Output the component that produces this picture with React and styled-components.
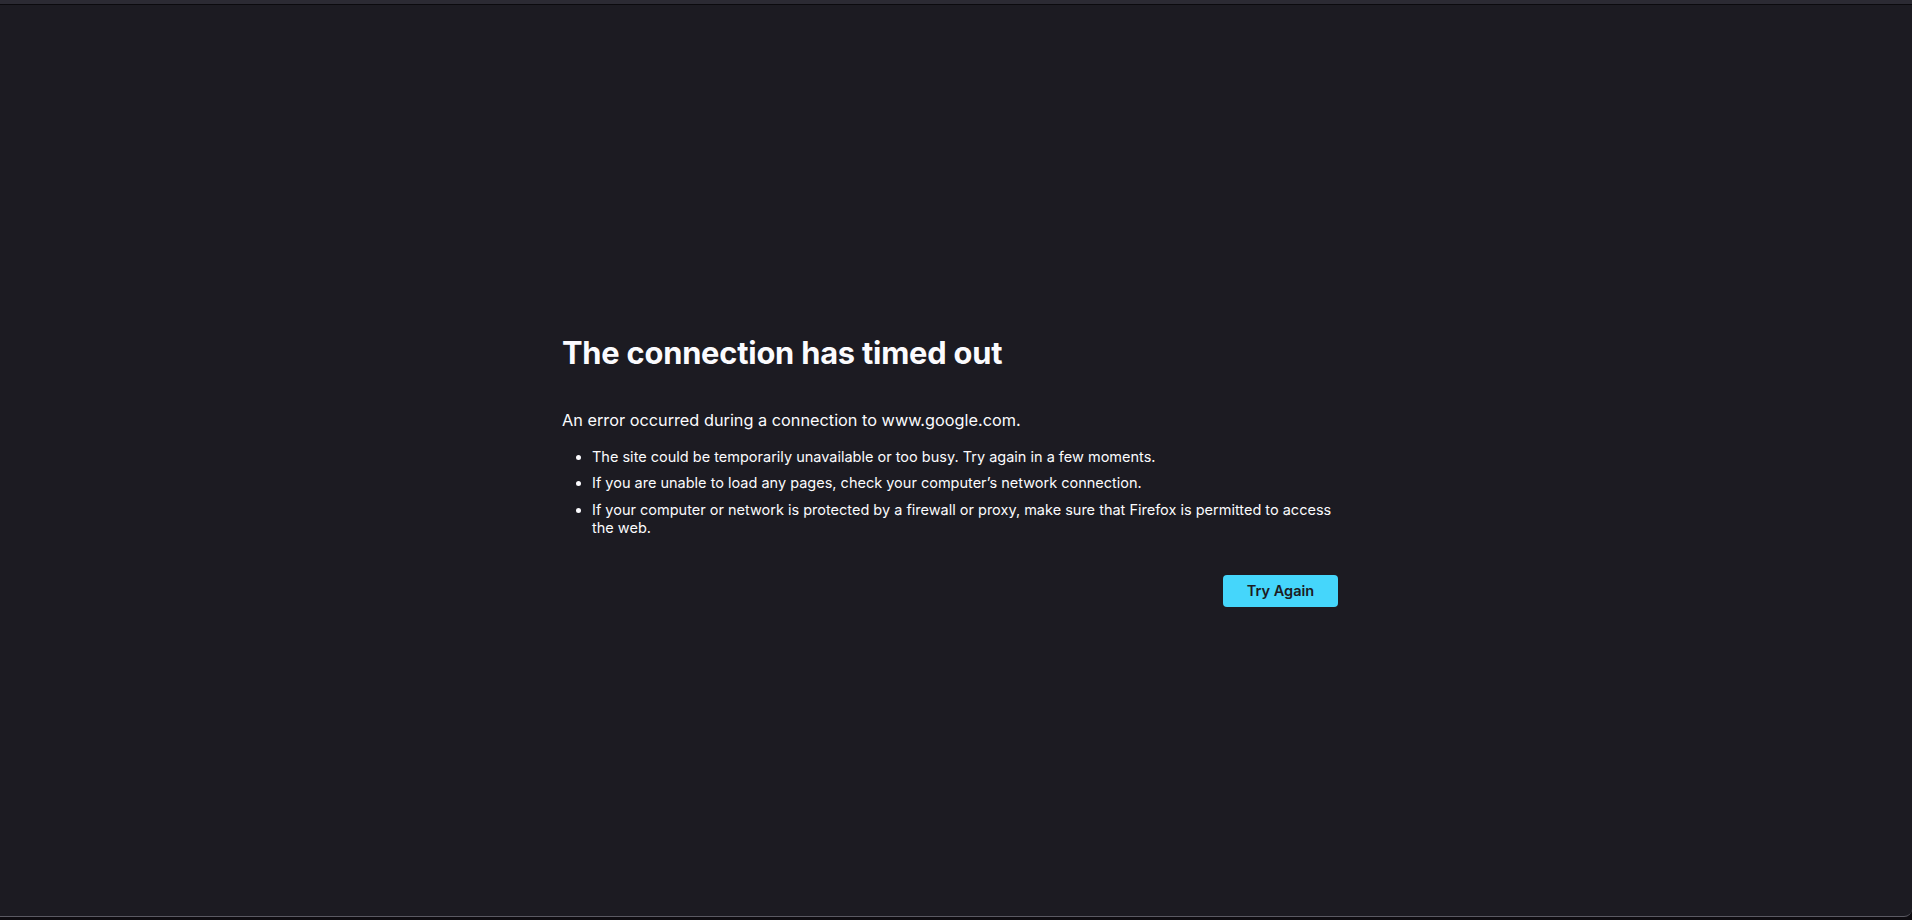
import React from 'react';
import styled, { createGlobalStyle } from 'styled-components';

const GlobalStyle = createGlobalStyle`
  html, body {
    margin: 0;
    padding: 0;
    height: 100%;
    background: #0f0d12;
  }
  #root {
    height: 100%;
  }
`;

const Window = styled.div`
  height: 920px;
  display: flex;
  flex-direction: column;
  background: #0f0d12;
  font-family: Inter, "Noto Sans", sans-serif;
  color: #fbfbfe;
  overflow: hidden;
`;

const TopStrip = styled.div`
  height: 4px;
  background: #2b2a33;
  border-bottom: 1px solid #0b0a0e;
  flex: none;
`;

const Page = styled.main`
  flex: 1;
  background: #1c1b22;
  border-bottom: 1px solid #5b5a63;
  border-bottom-right-radius: 8px;
  display: flex;
  align-items: center;
  justify-content: center;
  padding-right: 12px;
  padding-top: 18px;
`;

const Container = styled.div`
  width: 776px;
  display: flex;
  flex-direction: column;
`;

const Title = styled.h1`
  margin: 0 0 36px;
  font-size: 30.8px;
  font-weight: 700;
  line-height: 40px;
  letter-spacing: -0.2px;
`;

const ShortDesc = styled.p`
  margin: 0 0 17px;
  font-size: 16.3px;
  line-height: 22px;
`;

const List = styled.ul`
  margin: 0;
  padding-left: 30px;
`;

const Item = styled.li`
  font-size: 14.5px;
  line-height: 18.5px;
  margin-bottom: 8px;
`;

const Actions = styled.div`
  display: flex;
  justify-content: flex-end;
  margin-top: 29px;
`;

const Button = styled.button`
  width: 115px;
  height: 32px;
  border: none;
  border-radius: 4px;
  background: #45d6fb;
  color: #1c1b22;
  font-family: inherit;
  font-size: 14.5px;
  font-weight: 600;
  cursor: pointer;
`;

const BottomStrip = styled.div`
  height: 3px;
  flex: none;
  background: #0f0d12;
`;

const reasons = [
  'The site could be temporarily unavailable or too busy. Try again in a few moments.',
  'If you are unable to load any pages, check your computer’s network connection.',
  'If your computer or network is protected by a firewall or proxy, make sure that Firefox is permitted to access the web.',
];

export default function App() {
  return (
    <>
      <GlobalStyle />
      <Window>
        <TopStrip />
        <Page>
          <Container>
            <Title>The connection has timed out</Title>
            <ShortDesc>An error occurred during a connection to www.google.com.</ShortDesc>
            <List>
              {reasons.map((r) => (
                <Item key={r}>{r}</Item>
              ))}
            </List>
            <Actions>
              <Button>Try Again</Button>
            </Actions>
          </Container>
        </Page>
        <BottomStrip />
      </Window>
    </>
  );
}
